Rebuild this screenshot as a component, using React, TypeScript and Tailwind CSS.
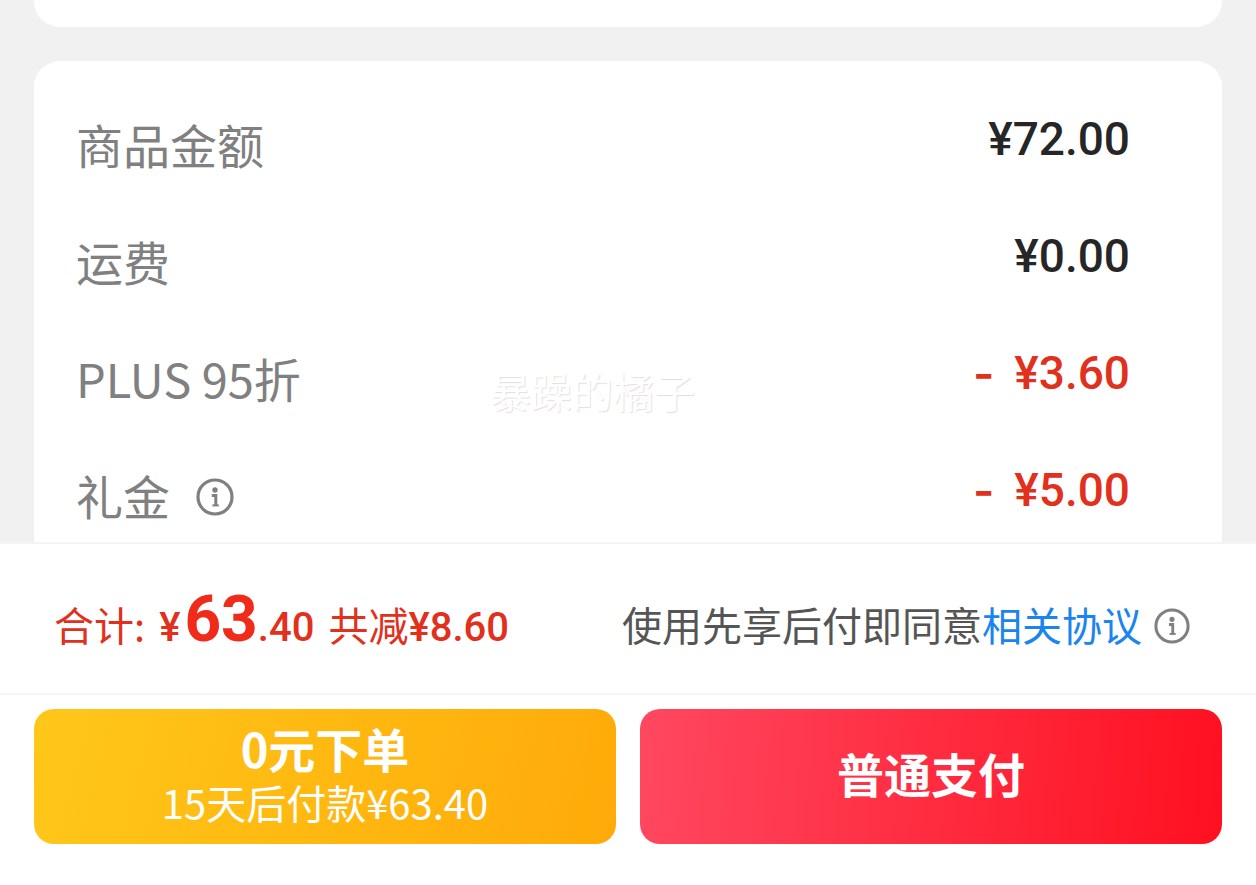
import React from "react";

interface FeeRow {
  label: string;
  amount: string;
  discount?: boolean;
  info?: boolean;
}

const rows: FeeRow[] = [
  { label: "商品金额", amount: "¥72.00" },
  { label: "运费", amount: "¥0.00" },
  { label: "PLUS 95折", amount: "¥3.60", discount: true },
  { label: "礼金", amount: "¥5.00", discount: true, info: true },
];

function InfoButton({ label, size }: { label: string; size: string }) {
  return (
    <button type="button" aria-label={label} className="cursor-pointer pt-1 text-[#808080]">
      <svg viewBox="0 0 38 38" fill="none" className={size} aria-hidden="true">
        <circle cx="19" cy="19" r="17" stroke="currentColor" strokeWidth="3.2" />
        <circle cx="19" cy="12" r="2.7" fill="currentColor" />
        <path d="M15.8 17.4h4V28" stroke="currentColor" strokeWidth="3" />
        <path d="M16.4 27.4h6.4" stroke="currentColor" strokeWidth="2" />
      </svg>
    </button>
  );
}

function FeeLine({ row }: { row: FeeRow }) {
  return (
    <div className="flex h-[117px] items-center justify-between">
      <dt className="flex items-center gap-[26px] text-[47px] leading-[60px] text-[#808080]">
        {row.label}
        {row.info && <InfoButton label="礼金说明" size="size-[38px]" />}
      </dt>
      <dd
        className={`flex gap-5 pb-[10px] font-['Roboto'] text-[46px] leading-[60px] font-medium ${
          row.discount ? "text-[#e1301b]" : "text-[#262626]"
        }`}
      >
        {row.discount && <span className="font-['Inter'] font-semibold">-</span>}
        <span>{row.amount}</span>
      </dd>
    </div>
  );
}

export default function App() {
  return (
    <div className="flex h-screen flex-col bg-[#f1f1f1] font-['Noto_Sans_CJK_SC',sans-serif]">
      <main className="relative min-h-0 flex-1 overflow-hidden px-[34px]">
        <div className="h-[27px] rounded-b-[26px] bg-white" />
        <dl className="mt-[34px] rounded-t-[26px] bg-white pt-6 pr-[92px] pl-[42px]">
          {rows.map((row) => (
            <FeeLine key={row.label} row={row} />
          ))}
        </dl>
        <span className="pointer-events-none absolute top-[360px] left-[490px] text-[41px] leading-[60px] text-white [text-shadow:1px_1px_1px_#e0e0e0]">
          暴躁的橘子
        </span>
      </main>

      <footer className="bg-white">
        <div className="flex h-[153px] items-center justify-between border-y-2 border-[#f4f4f4] pt-[10px] pr-[66px] pl-[54px] text-[40px] leading-[60px]">
          <p className="flex items-baseline text-[#e1301b]">
            <span>合计:</span>
            <span className="ml-[14px] font-['Roboto'] font-medium">¥</span>
            <span className="ml-1 font-['Roboto'] text-[64px] font-bold text-[#f02b1a]">63</span>
            <span className="font-['Roboto'] font-medium">.40</span>
            <span className="ml-[14px]">共减</span>
            <span className="font-['Roboto'] font-medium">¥8.60</span>
          </p>
          <div className="flex items-center gap-3 text-[#555]">
            <p>
              使用先享后付即同意
              <a href="#agreement" className="text-[#1a84f0]">相关协议</a>
            </p>
            <InfoButton label="协议说明" size="size-9" />
          </div>
        </div>

        <div className="grid grid-cols-2 gap-6 px-[34px] pt-[14px] pb-[41px] text-white">
          <button
            type="button"
            className="flex h-[135px] cursor-pointer flex-col items-center justify-center rounded-[20px] bg-linear-[105deg,#ffc71a,#ffaa08] pb-1"
          >
            <span className="text-[47px] leading-[54px] font-bold">0元下单</span>
            <span className="text-[40px] leading-[54px]">15天后付款¥63.40</span>
          </button>
          <button
            type="button"
            className="h-[135px] cursor-pointer rounded-[20px] bg-linear-[95deg,#ff4860,#ff1020] pb-2 text-[47px] leading-[60px] font-bold"
          >
            普通支付
          </button>
        </div>
      </footer>
    </div>
  );
}
